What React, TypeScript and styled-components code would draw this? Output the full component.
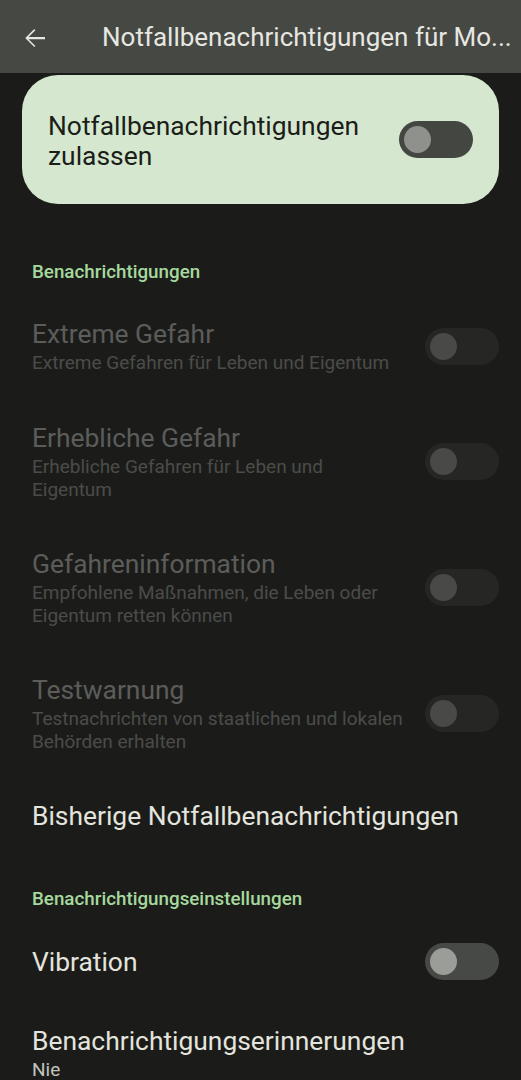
import styled, { createGlobalStyle } from "styled-components";

const GlobalStyle = createGlobalStyle`
  html, body {
    margin: 0;
    padding: 0;
    background: #1b1c1a;
  }
  body {
    font-family: Roboto, "Noto Sans", sans-serif;
    -webkit-font-smoothing: antialiased;
  }
`;

const Screen = styled.div`
  width: 521px;
  height: 1080px;
  overflow: hidden;
  background: #1b1c1a;
`;

const TopBar = styled.header`
  display: flex;
  align-items: center;
  height: 73px;
  padding-left: 20px;
  background: #464844;
  color: #e6e7e1;
`;

const BackButton = styled.div`
  display: flex;
  width: 30px;
  height: 30px;
  margin-right: 52px;
  margin-top: 2px;
  svg {
    width: 30px;
    height: 30px;
  }
`;

const BarTitle = styled.h1`
  margin: 0;
  font-size: 26px;
  font-weight: 400;
  white-space: nowrap;
`;

const MainCard = styled.div`
  display: flex;
  align-items: center;
  justify-content: space-between;
  height: 129px;
  margin: 2px 22px 0;
  padding: 0 26px;
  box-sizing: border-box;
  border-radius: 36px;
  background: #d5e8cf;
`;

const CardLabel = styled.div`
  font-size: 26.4px;
  line-height: 30px;
  color: #1b1d19;
  margin-top: 2px;
`;

const SectionHeader = styled.div<{ $top: number }>`
  margin-top: ${(p) => p.$top}px;
  padding: 0 32px;
  font-size: 18.8px;
  font-weight: 500;
  line-height: 24px;
  color: #a6d99d;
`;

const Row = styled.div<{ $pt?: number; $pb?: number }>`
  display: flex;
  align-items: center;
  justify-content: space-between;
  padding: ${(p) => p.$pt ?? 24}px 22px ${(p) => p.$pb ?? 24}px 32px;
`;

const RowText = styled.div`
  display: flex;
  flex-direction: column;
  max-width: 372px;
`;

const RowTitle = styled.div<{ $disabled?: boolean }>`
  font-size: 26.4px;
  line-height: 32px;
  white-space: nowrap;
  color: ${(p) => (p.$disabled ? "#5c5d5a" : "#e4e4de")};
`;

const RowSub = styled.div<{ $disabled?: boolean }>`
  margin-top: 2px;
  font-size: 19px;
  line-height: 22.5px;
  color: ${(p) => (p.$disabled ? "#4b4c49" : "#c2c5bd")};
`;

type ToggleKind = "card" | "enabled" | "disabled";

const trackColor: Record<ToggleKind, string> = {
  card: "#434641",
  enabled: "#474946",
  disabled: "#262725",
};

const thumbColor: Record<ToggleKind, string> = {
  card: "#8f918c",
  enabled: "#9b9d98",
  disabled: "#494a47",
};

const Track = styled.div<{ $kind: ToggleKind }>`
  flex-shrink: 0;
  display: flex;
  align-items: center;
  width: 74px;
  height: 37px;
  padding-left: 5px;
  box-sizing: border-box;
  border-radius: 19px;
  background: ${(p) => trackColor[p.$kind]};
`;

const Thumb = styled.div<{ $kind: ToggleKind }>`
  width: 27px;
  height: 27px;
  border-radius: 50%;
  background: ${(p) => thumbColor[p.$kind]};
`;

const Toggle = ({ kind }: { kind: ToggleKind }) => (
  <Track $kind={kind}>
    <Thumb $kind={kind} />
  </Track>
);

const alerts = [
  {
    title: "Extreme Gefahr",
    sub: "Extreme Gefahren für Leben und Eigentum",
  },
  {
    title: "Erhebliche Gefahr",
    sub: "Erhebliche Gefahren für Leben und Eigentum",
  },
  {
    title: "Gefahreninformation",
    sub: "Empfohlene Maßnahmen, die Leben oder Eigentum retten können",
  },
  {
    title: "Testwarnung",
    sub: "Testnachrichten von staatlichen und lokalen Behörden erhalten",
  },
];

export default function App() {
  return (
    <Screen>
      <GlobalStyle />
      <TopBar>
        <BackButton>
          <svg viewBox="0 0 24 24" fill="#e6e7e1">
            <path d="M20 11.1H6.9l5.4-5.4L11.4 4.8 4.2 12l7.2 7.2.9-.9-5.4-5.4H20v-1.8z" />
          </svg>
        </BackButton>
        <BarTitle>Notfallbenachrichtigungen für Mo...</BarTitle>
      </TopBar>

      <MainCard>
        <CardLabel>
          Notfallbenachrichtigungen
          <br />
          zulassen
        </CardLabel>
        <Toggle kind="card" />
      </MainCard>

      <SectionHeader $top={56}>Benachrichtigungen</SectionHeader>
      {alerts.map((a, i) => (
        <Row key={a.title} $pt={i === 0 ? 34 : 24} $pb={i === 0 ? 23.5 : 23}>
          <RowText>
            <RowTitle $disabled>{a.title}</RowTitle>
            <RowSub $disabled>{a.sub}</RowSub>
          </RowText>
          <Toggle kind="disabled" />
        </Row>
      ))}

      <Row $pt={24} $pb={25}>
        <RowTitle>Bisherige Notfallbenachrichtigungen</RowTitle>
      </Row>

      <SectionHeader $top={30}>Benachrichtigungseinstellungen</SectionHeader>
      <Row $pt={32} $pb={21}>
        <RowTitle>Vibration</RowTitle>
        <Toggle kind="enabled" />
      </Row>

      <Row $pt={24}>
        <RowText>
          <RowTitle>Benachrichtigungserinnerungen</RowTitle>
          <RowSub>Nie</RowSub>
        </RowText>
      </Row>
    </Screen>
  );
}
